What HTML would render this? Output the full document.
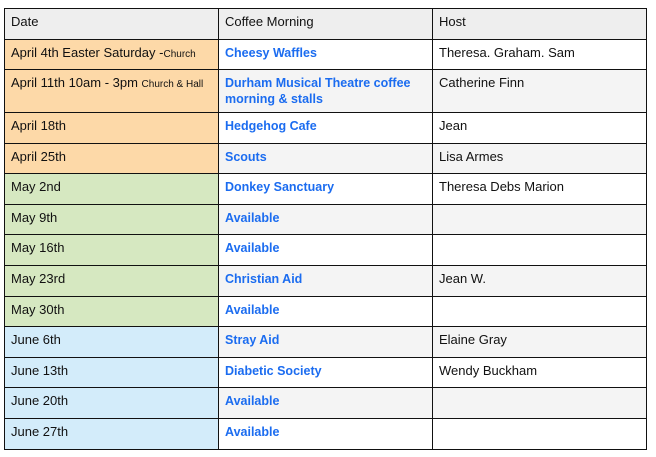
<!DOCTYPE html>
<html><head><style>
body{margin:0;background:#fff;font-family:"Liberation Sans",Arial,sans-serif;font-size:13px;color:#111;}
table{position:absolute;left:4px;top:8px;border-collapse:collapse;width:643px;}
td{border:1.5px solid #111;padding:0 6px;vertical-align:top;padding-top:5px;box-sizing:border-box;line-height:16px;}
tr{height:30.6px;}
tr.h td{background:#eee;height:31px;}
.c1{width:214px}.c2{width:214px}
.o{background:#fdd9a8}.g{background:#d6e8c1}.b{background:#d3ecfa}
.l{color:#1b6cf0;font-weight:bold;font-size:12.5px}
tr.a td:not(.o):not(.g):not(.b){background:#f4f4f4}
small{font-size:10px}
</style></head><body>
<table>
<tr class="h"><td class="c1">Date</td><td class="c2">Coffee Morning</td><td>Host</td></tr>
<tr style="height:30px"><td class="o">April 4th Easter Saturday -<small>Church</small></td><td class="l">Cheesy Waffles</td><td>Theresa. Graham. Sam</td></tr>
<tr class="a" style="height:43px"><td class="o">April 11th 10am - 3pm <small>Church &amp; Hall</small></td><td class="l">Durham Musical Theatre coffee morning &amp; stalls</td><td>Catherine Finn</td></tr>
<tr><td class="o">April 18th</td><td class="l">Hedgehog Cafe</td><td>Jean</td></tr>
<tr class="a"><td class="o">April 25th</td><td class="l">Scouts</td><td>Lisa Armes</td></tr>
<tr><td class="g">May 2nd</td><td class="l">Donkey Sanctuary</td><td>Theresa Debs Marion</td></tr>
<tr class="a"><td class="g">May 9th</td><td class="l">Available</td><td></td></tr>
<tr><td class="g">May 16th</td><td class="l">Available</td><td></td></tr>
<tr class="a"><td class="g">May 23rd</td><td class="l">Christian Aid</td><td>Jean W.</td></tr>
<tr><td class="g">May 30th</td><td class="l">Available</td><td></td></tr>
<tr class="a"><td class="b">June 6th</td><td class="l">Stray Aid</td><td>Elaine Gray</td></tr>
<tr><td class="b">June 13th</td><td class="l">Diabetic Society</td><td>Wendy Buckham</td></tr>
<tr class="a"><td class="b">June 20th</td><td class="l">Available</td><td></td></tr>
<tr><td class="b">June 27th</td><td class="l">Available</td><td></td></tr>
</table>
</body></html>
